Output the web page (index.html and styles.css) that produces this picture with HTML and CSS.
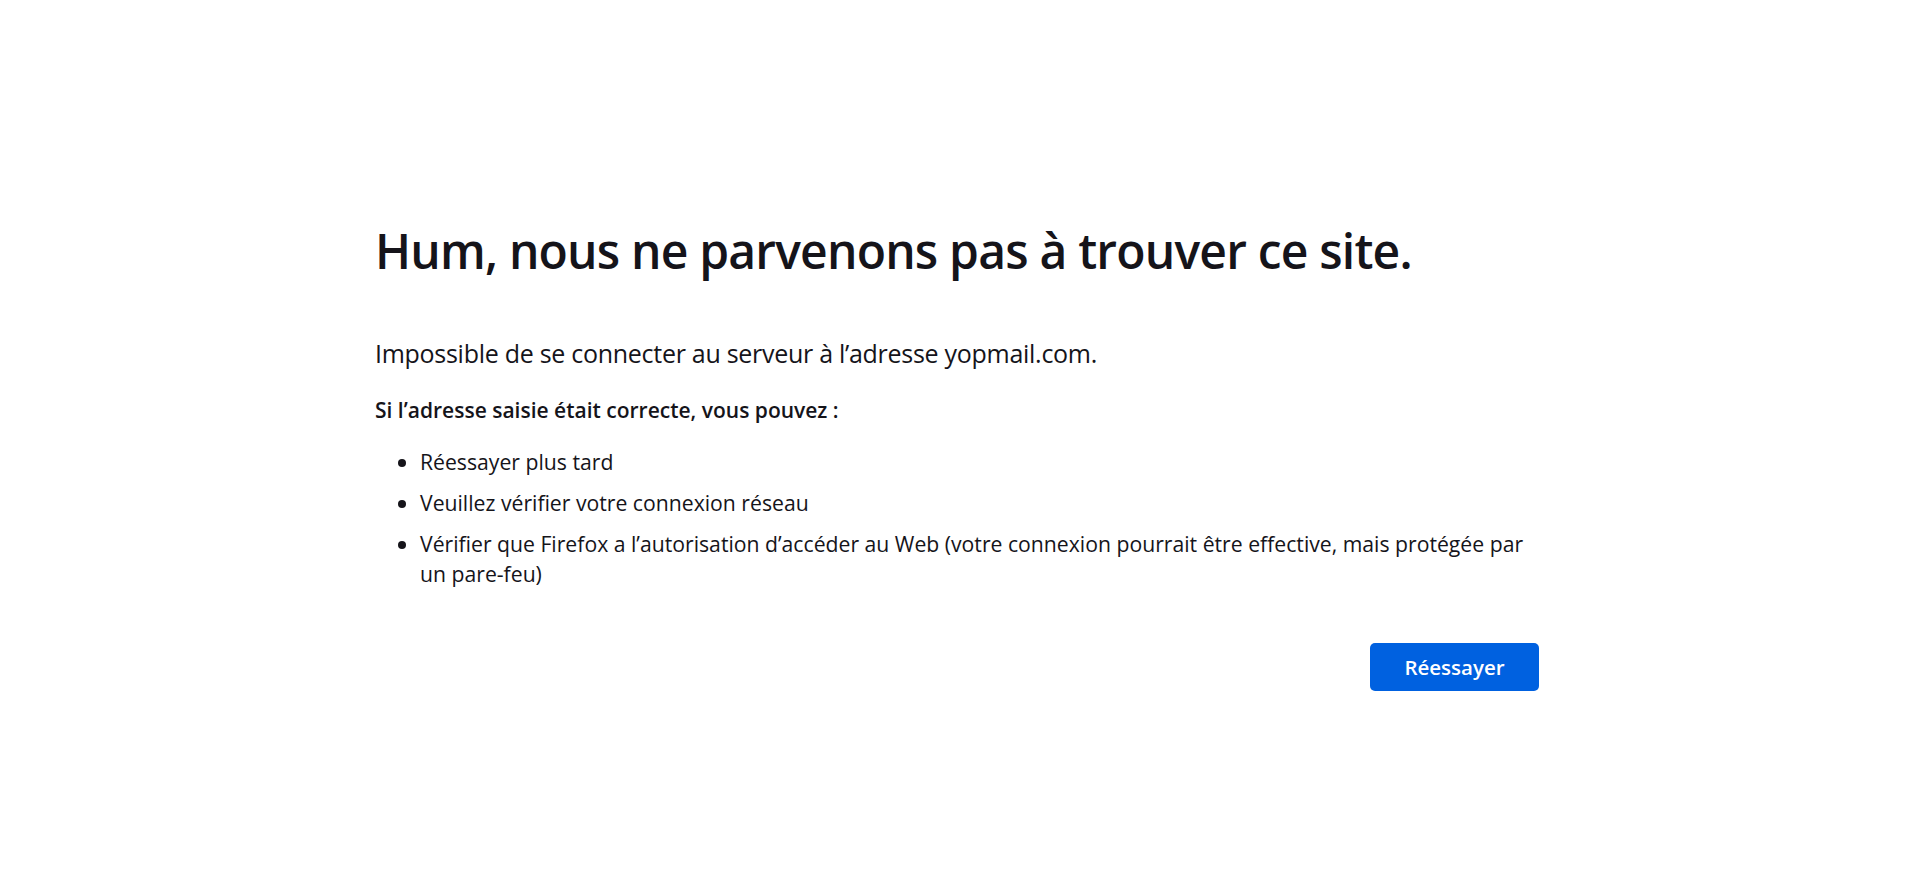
FILE: index.html
```html
<!DOCTYPE html>
<html lang="fr">
<head>
<meta charset="utf-8">
<title>Problème de chargement de la page</title>
<link rel="stylesheet" href="styles.css">
</head>
<body>
<div class="container">
  <h1 class="title">Hum, nous ne parvenons pas à trouver ce site.</h1>
  <p class="short-desc">Impossible de se connecter au serveur à l’adresse yopmail.com.</p>
  <p class="lead">Si l’adresse saisie était correcte, vous pouvez :</p>
  <ul class="tips">
    <li>Réessayer plus tard</li>
    <li>Veuillez vérifier votre connexion réseau</li>
    <li>Vérifier que Firefox a l’autorisation d’accéder au Web (votre connexion pourrait être effective, mais protégée par un pare-feu)</li>
  </ul>
  <div class="actions">
    <button class="primary">Réessayer</button>
  </div>
</div>
</body>
</html>
```

FILE: styles.css
```css
html, body {
  margin: 0;
  padding: 0;
  background: #ffffff;
}
body {
  font-family: "Open Sans", "Noto Sans", sans-serif;
  color: #15141a;
  font-size: 21px;
}
.container {
  width: 1164px;
  margin-left: calc(50% - 585px);
  padding-top: 221px;
}
.title {
  font-size: 48px;
  font-weight: 600;
  letter-spacing: -0.8px;
  line-height: 60px;
  margin: 0 0 54px 0;
}
.short-desc {
  font-size: 25px;
  letter-spacing: -0.28px;
  line-height: 36px;
  margin: 0 0 24px 0;
}
.lead {
  font-size: 21px;
  font-weight: 600;
  line-height: 30px;
  margin: 0 0 22px 0;
}
.tips {
  margin: 0;
  padding-left: 45px;
  font-size: 21.2px;
  line-height: 30px;
}
.tips li {
  margin-bottom: 11px;
}
.actions {
  display: flex;
  justify-content: flex-end;
  margin-top: 54px;
}
.primary {
  width: 169px;
  height: 48px;
  border: none;
  border-radius: 5px;
  background: #0061e0;
  color: #ffffff;
  font-family: inherit;
  font-size: 20.5px;
  font-weight: 600;
}
```
